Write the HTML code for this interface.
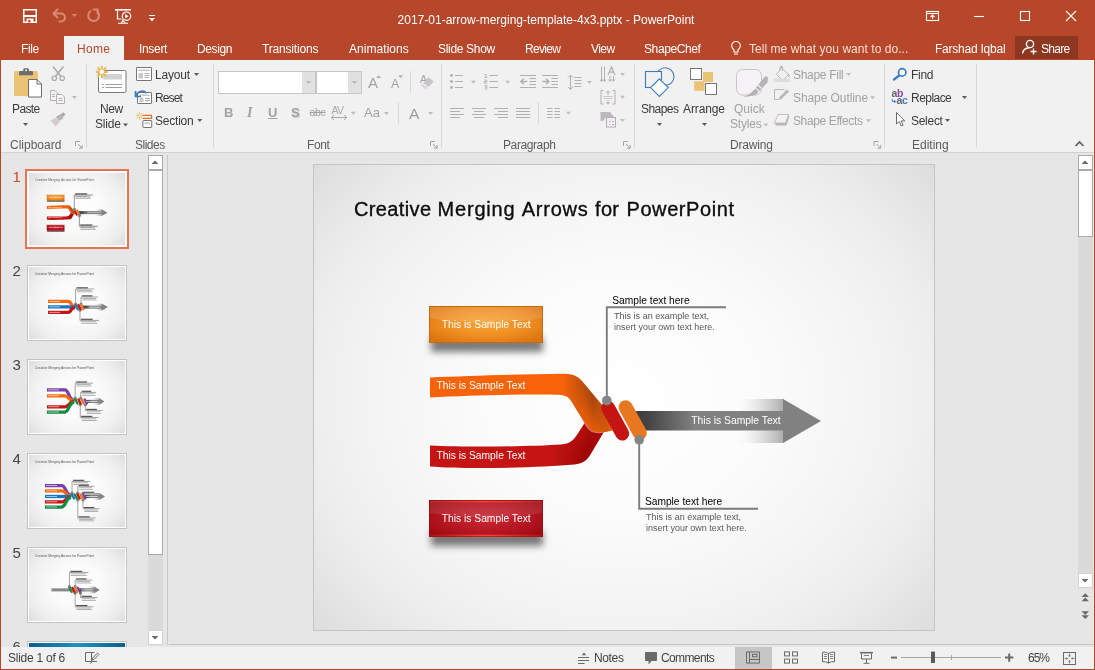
<!DOCTYPE html>
<html>
<head>
<meta charset="utf-8">
<title>PowerPoint</title>
<style>
html,body{margin:0;padding:0;}
body{will-change:transform;width:1095px;height:670px;overflow:hidden;position:relative;background:#e6e6e6;font-family:"Liberation Sans",sans-serif;font-size:12px;color:#444;}
.abs{position:absolute;}
#titlebar{left:0;top:0;width:1095px;height:60px;background:#b7472a;}
#title{left:0;width:1092px;top:13px;text-align:center;color:#fff;font-size:12px;letter-spacing:0px;}
.tab{position:absolute;top:37px;height:24px;line-height:24px;color:#fff;font-size:12px;white-space:nowrap;}
#hometab{left:64px;width:60px;top:36px;height:24px;background:#f1f1f1;}
#ribbon{left:1px;top:60px;width:1093px;height:92px;background:#f1f1f1;border-bottom:1px solid #d2d2d2;}
.glabel{position:absolute;top:138px;font-size:12px;color:#5c5c5c;white-space:nowrap;}
.gsep{position:absolute;top:64px;height:84px;width:1px;background:#d8d8d8;}
.rt{position:absolute;font-size:12px;color:#3b3b3b;white-space:nowrap;}
.rtd{position:absolute;font-size:12px;color:#a2a2a2;white-space:nowrap;}
#status{left:1px;top:647px;width:1093px;height:22px;background:#f1f1f1;}
.st{position:absolute;font-size:12px;color:#444;white-space:nowrap;}
#winborder{left:0;top:0;width:1093px;height:669px;border:1px solid #b7472a;border-top:none;pointer-events:none;}
.thumb{position:absolute;left:27px;width:98px;height:74px;border:1px solid #c3c3c3;background:#fff;}
.thumb .in{position:absolute;left:1px;top:1px;width:96px;height:72px;background:radial-gradient(ellipse 65px 56px at 50% 50%,#ffffff 0%,#fbfbfb 35%,#f5f5f5 55%,#f2f2f2 64.500%,#eeeeee 74%,#ebebeb 79%,#e3e3e3 90%,#dbdbdb 100%);overflow:hidden;}
.tnum{position:absolute;left:12.500px;font-size:15px;color:#444;width:10px;}
.stx{font-size:10.500px;color:#fff;white-space:nowrap;line-height:12px;}
.shd{font-size:10px;color:#000;white-space:nowrap;line-height:12px;}
.sbd{font-size:9.500px;color:#5a5a5a;white-space:nowrap;line-height:11px;}
</style>
</head>
<body>
<!-- TITLE BAR -->
<div id="titlebar" class="abs"></div>
<div id="title" class="abs">2017-01-arrow-merging-template-4x3.pptx - PowerPoint</div>
<div id="hometab" class="abs"></div>
<div id="tabs">
<div class="tab" style="left:21px;letter-spacing:-0.40px;">File</div>
<div class="tab" style="left:77px;color:#b7472a;letter-spacing:0.30px;">Home</div>
<div class="tab" style="left:139px;letter-spacing:-0.32px;">Insert</div>
<div class="tab" style="left:197px;letter-spacing:-0.38px;">Design</div>
<div class="tab" style="left:262px;letter-spacing:-0.18px;">Transitions</div>
<div class="tab" style="left:349px;letter-spacing:0.05px;">Animations</div>
<div class="tab" style="left:438px;letter-spacing:-0.32px;">Slide Show</div>
<div class="tab" style="left:525px;letter-spacing:-0.70px;">Review</div>
<div class="tab" style="left:591px;letter-spacing:-0.55px;">View</div>
<div class="tab" style="left:644px;letter-spacing:-0.40px;">ShapeChef</div>
<div class="tab" style="left:749px;color:#f6ddd5;letter-spacing:0.04px;">Tell me what you want to do...</div>
<div class="tab" style="left:935px;letter-spacing:-0.23px;">Farshad Iqbal</div>
<div class="abs" style="left:1015px;top:36px;width:63px;height:23px;background:#8e3720;"></div>
<div class="tab" style="left:1041px;letter-spacing:-0.72px;">Share</div>
</div>
<!-- RIBBON -->
<div id="ribbon" class="abs"></div>
<div id="ribbonc">
<!-- group separators -->
<div class="gsep" style="left:86px;"></div>
<div class="gsep" style="left:213px;"></div>
<div class="gsep" style="left:441px;"></div>
<div class="gsep" style="left:634px;"></div>
<div class="gsep" style="left:884px;"></div>
<div class="gsep" style="left:976px;"></div>
<!-- group labels -->
<div class="glabel" style="left:10px;letter-spacing:0.00px;">Clipboard</div>
<div class="glabel" style="left:135px;letter-spacing:-0.50px;">Slides</div>
<div class="glabel" style="left:307px;letter-spacing:-0.40px;">Font</div>
<div class="glabel" style="left:503px;letter-spacing:-0.40px;">Paragraph</div>
<div class="glabel" style="left:730px;letter-spacing:-0.19px;">Drawing</div>
<div class="glabel" style="left:912px;letter-spacing:0.00px;">Editing</div>
<!-- clipboard -->
<div class="rt" style="left:12px;top:102px;letter-spacing:-0.62px;">Paste</div>
<!-- slides -->
<div class="rt" style="left:100px;top:102px;letter-spacing:-0.45px;">New</div>
<div class="rt" style="left:95px;top:117px;letter-spacing:-0.18px;">Slide</div>
<div class="rt" style="left:155px;top:68px;letter-spacing:-0.18px;">Layout</div>
<div class="rt" style="left:155px;top:91px;letter-spacing:-0.86px;">Reset</div>
<div class="rt" style="left:155px;top:114px;letter-spacing:-0.22px;">Section</div>
<!-- font -->
<div class="abs" style="left:218px;top:71px;width:96px;height:21px;border:1px solid #c6c6c6;background:#fff;"></div>
<div class="abs" style="left:302px;top:72px;width:13px;height:21px;background:#e1e1e1;"></div>
<div class="abs" style="left:316px;top:71px;width:44px;height:21px;border:1px solid #c6c6c6;background:#fff;"></div>
<div class="abs" style="left:348px;top:72px;width:13px;height:21px;background:#e1e1e1;"></div>
<div class="rtd" style="left:224px;top:105px;font-weight:bold;font-size:13px;">B</div>
<div class="rtd" style="left:247px;top:105px;font-style:italic;font-family:'Liberation Serif',serif;font-size:14px;font-weight:bold;">I</div>
<div class="rtd" style="left:268px;top:105px;font-size:13px;text-decoration:underline;font-weight:bold;">U</div>
<div class="rtd" style="left:291px;top:105px;font-size:13px;font-weight:bold;text-shadow:1px 1px 1px #c8c8c8;">S</div>
<div class="rtd" style="left:309.500px;top:106px;font-size:10.500px;letter-spacing:-0.300px;text-decoration:line-through;">abc</div>
<div class="rtd" style="left:331.500px;top:103.500px;font-size:10.500px;letter-spacing:-0.600px;color:#a9a9a9;">AV</div>
<div class="rtd" style="left:364px;top:105px;font-size:13px;">Aa</div>
<div class="rtd" style="left:409px;top:104.500px;font-size:15.500px;color:#9c9c9c;">A</div>
<div class="rtd" style="left:368px;top:74px;font-size:15px;">A</div>
<div class="rtd" style="left:391px;top:77px;font-size:12.5px;">A</div>
<div class="abs" style="left:410px;top:71px;width:1px;height:22px;background:#d8d8d8;"></div>
<div class="abs" style="left:398px;top:102px;width:1px;height:22px;background:#d8d8d8;"></div>
<div class="abs" style="left:538px;top:102px;width:1px;height:22px;background:#d8d8d8;"></div>
<!-- drawing -->
<div class="rt" style="left:641px;top:102px;letter-spacing:-0.56px;">Shapes</div>
<div class="rt" style="left:683px;top:102px;letter-spacing:-0.12px;">Arrange</div>
<div class="rtd" style="left:734px;top:102px;letter-spacing:0.00px;">Quick</div>
<div class="rtd" style="left:730px;top:117px;letter-spacing:-0.17px;">Styles</div>
<div class="rtd" style="left:793px;top:68px;letter-spacing:-0.30px;">Shape Fill</div>
<div class="rtd" style="left:793px;top:91px;letter-spacing:-0.08px;">Shape Outline</div>
<div class="rtd" style="left:793px;top:114px;letter-spacing:-0.38px;">Shape Effects</div>
<!-- editing -->
<div class="rt" style="left:911px;top:68px;letter-spacing:-0.28px;">Find</div>
<div class="rt" style="left:911px;top:91px;letter-spacing:-0.54px;">Replace</div>
<div class="rt" style="left:911px;top:114px;letter-spacing:-0.28px;">Select</div>
<div class="abs" style="left:891.500px;top:86.500px;font-size:10.500px;line-height:12px;color:#666;font-weight:bold;letter-spacing:-0.300px;">a<span style="color:#8b46a8">b</span></div>
<div class="abs" style="left:896.500px;top:93.500px;font-size:10.500px;line-height:12px;color:#666;font-weight:bold;letter-spacing:-0.300px;">a<span style="color:#3b7cc0">c</span></div>
<div class="rtd" style="left:420px;top:73px;font-size:10.500px;">A</div>
</div>
<!-- LEFT PANE -->
<div id="leftpane">
<!-- selected thumb -->
<div class="abs" style="left:25px;top:169px;width:98px;height:74px;border:3px solid #ec7152;background:#fff;"></div>
<div class="thumb" style="top:171px;border-color:#fff;left:27px;"><div class="in"><svg width="96" height="72" viewBox="314 165 620 465"><use href="#slidemain"/><use href="#mini1x"/></svg></div></div>
<div class="tnum" style="top:168px;color:#d24726;">1</div>
<div class="thumb" style="top:265px;"><div class="in"><svg width="96" height="72" viewBox="314 165 620 465"><use href="#slidemini2"/></svg></div></div>
<div class="tnum" style="top:262px;">2</div>
<div class="thumb" style="top:359px;"><div class="in"><svg width="96" height="72" viewBox="314 165 620 465"><use href="#slidemini3"/></svg></div></div>
<div class="tnum" style="top:356px;">3</div>
<div class="thumb" style="top:453px;"><div class="in"><svg width="96" height="72" viewBox="314 165 620 465"><use href="#slidemini4"/></svg></div></div>
<div class="tnum" style="top:450px;">4</div>
<div class="thumb" style="top:547px;"><div class="in"><svg width="96" height="72" viewBox="314 165 620 465"><use href="#slidemini5"/></svg></div></div>
<div class="tnum" style="top:544px;">5</div>
<div class="thumb" style="top:641px;height:6px;border-bottom:none;overflow:hidden;"><div class="in" style="background:radial-gradient(ellipse at 50% 0%,#1f93c4 0%,#0b5f8a 70%,#084a6e 100%);"></div></div>
<div class="tnum" style="top:638px;height:9px;overflow:hidden;">6</div>
<!-- scrollbar -->
<div class="abs" style="left:148px;top:155px;width:15px;height:490px;background:#dadada;"></div>
<div class="abs" style="left:148px;top:155px;width:13px;height:13px;background:#fff;border:1px solid #ababab;"></div>
<div class="abs" style="left:148px;top:170px;width:13px;height:383px;background:#fff;border:1px solid #ababab;"></div>
<div class="abs" style="left:148px;top:630px;width:13px;height:13px;background:#fff;border:1px solid #d4d4d4;"></div>
<!-- splitter -->
<div class="abs" style="left:167px;top:155px;width:1px;height:490px;background:#c8c8c8;"></div>
<div class="abs" style="left:169px;top:644px;width:925px;height:1px;background:#c4c4c4;"></div>
</div>
<!-- SLIDE -->
<div id="slidewrap">
<div class="abs" style="left:313px;top:164px;width:622px;height:467px;background:#c4c4c4;"></div>
<div class="abs" id="slidebg" style="left:314px;top:165px;width:620px;height:465px;background:radial-gradient(ellipse 420px 360px at 50% 50%,#ffffff 0%,#fbfbfb 35%,#f5f5f5 55%,#f2f2f2 64.500%,#eeeeee 74%,#ebebeb 79%,#e3e3e3 90%,#dbdbdb 100%);"></div>
<svg class="abs" style="left:314px;top:165px;" width="620" height="465" viewBox="314 165 620 465">
<defs>
<linearGradient id="gOr" x1="0" y1="0" x2="1" y2="0"><stop offset="0" stop-color="#f8630a"/><stop offset="0.730" stop-color="#f8630a"/><stop offset="0.800" stop-color="#d2560b"/><stop offset="0.890" stop-color="#aa460d"/><stop offset="0.950" stop-color="#c9530c"/><stop offset="1" stop-color="#e2600c"/></linearGradient>
<linearGradient id="gOr2" gradientUnits="userSpaceOnUse" x1="571" y1="419" x2="595" y2="399"><stop offset="0" stop-color="#f6640b" stop-opacity="1"/><stop offset="0.450" stop-color="#e85f0b" stop-opacity="0.750"/><stop offset="1" stop-color="#c9530c" stop-opacity="0"/></linearGradient>
<linearGradient id="gRd" x1="0" y1="0" x2="1" y2="0"><stop offset="0" stop-color="#c41414"/><stop offset="0.700" stop-color="#c41414"/><stop offset="0.900" stop-color="#9c0606"/><stop offset="1" stop-color="#b00c0c"/></linearGradient>
<linearGradient id="gRd2" gradientUnits="userSpaceOnUse" x1="570" y1="432" x2="592" y2="447"><stop offset="0" stop-color="#c81515" stop-opacity="1"/><stop offset="0.500" stop-color="#b80f0f" stop-opacity="0.600"/><stop offset="1" stop-color="#a00808" stop-opacity="0"/></linearGradient>
<linearGradient id="gGy" x1="0" y1="0" x2="1" y2="0"><stop offset="0" stop-color="#3a3a3a"/><stop offset="0.12" stop-color="#454545"/><stop offset="0.42" stop-color="#818181"/><stop offset="1" stop-color="#818181"/></linearGradient>
<linearGradient id="gWing" x1="0" y1="0" x2="1" y2="0"><stop offset="0" stop-color="#f2f2f2" stop-opacity="0"/><stop offset="0.45" stop-color="#e2e2e2" stop-opacity="0.9"/><stop offset="1" stop-color="#adadad"/></linearGradient>
<radialGradient id="gBo" cx="0.5" cy="0.45" r="0.65"><stop offset="0" stop-color="#f9a437"/><stop offset="0.55" stop-color="#f08f22"/><stop offset="1" stop-color="#dc740f"/></radialGradient>
<linearGradient id="gGlow" x1="0" y1="0" x2="1" y2="0"><stop offset="0" stop-color="#ff4030" stop-opacity="0.150"/><stop offset="0.500" stop-color="#ff4030" stop-opacity="1"/><stop offset="1" stop-color="#ff4030" stop-opacity="0.150"/></linearGradient>
<radialGradient id="gBr" cx="0.5" cy="0.5" r="0.62"><stop offset="0" stop-color="#c92a36"/><stop offset="0.55" stop-color="#b81824"/><stop offset="1" stop-color="#9f0a12"/></radialGradient>
<filter id="blur3" x="-20%" y="-100%" width="140%" height="300%"><feGaussianBlur stdDeviation="3.600"/></filter>
<g id="slidemini2">
<text x="353" y="216" font-size="21.500" fill="#555" textLength="381" lengthAdjust="spacingAndGlyphs">Creative Merging Arrows for PowerPoint</text>
<rect x="740" y="402" width="46" height="44" fill="url(#gWing)"/>
<rect x="660" y="414" width="126" height="20" fill="url(#gGy)"/>
<path d="M785 402 L824 424 L785 446z" fill="#818181"/>
<path d="M437 387 H565 C593 387 576 420.0 612 420.0" fill="none" stroke="#f26a0c" stroke-width="21"/>
<rect x="445" y="384" width="70" height="5" fill="#fff" opacity="0.750"/>
<path d="M437 423 H565 C593 423 576 424.0 612 424.0" fill="none" stroke="#1577c2" stroke-width="21"/>
<rect x="445" y="420" width="70" height="5" fill="#fff" opacity="0.750"/>
<path d="M437 458 H565 C593 458 576 428.0 612 428.0" fill="none" stroke="#c41414" stroke-width="21"/>
<rect x="445" y="455" width="70" height="5" fill="#fff" opacity="0.750"/>
<path d="M615 404 V307 H734" fill="none" stroke="#7c7c7c" stroke-width="4.500"/>
<circle cx="615" cy="404" r="10.500" fill="#858585"/>
<rect x="621" y="296" width="73" height="7" fill="#1a1a1a" opacity="0.800"/>
<rect x="623" y="313" width="95" height="5" fill="#777" opacity="0.700"/>
<rect x="623" y="323" width="101" height="5" fill="#777" opacity="0.700"/>
<path d="M650 404 V359 H760" fill="none" stroke="#7c7c7c" stroke-width="4.500"/>
<circle cx="650" cy="404" r="10.500" fill="#858585"/>
<rect x="656" y="348" width="68" height="7" fill="#1a1a1a" opacity="0.800"/>
<rect x="658" y="365" width="88" height="5" fill="#777" opacity="0.700"/>
<rect x="658" y="375" width="93" height="5" fill="#777" opacity="0.700"/>
<path d="M643 444 V510 H766" fill="none" stroke="#7c7c7c" stroke-width="4.500"/>
<circle cx="643" cy="444" r="10.500" fill="#858585"/>
<rect x="649" y="499" width="76" height="7" fill="#1a1a1a" opacity="0.800"/>
<rect x="651" y="516" width="98" height="5" fill="#777" opacity="0.700"/>
<rect x="651" y="526" width="104" height="5" fill="#777" opacity="0.700"/>
<path d="M615 411 L629 437" stroke="#1577c2" stroke-width="15" stroke-linecap="round" fill="none"/>
<path d="M633 411 L647 437" stroke="#c41414" stroke-width="15" stroke-linecap="round" fill="none"/>
<path d="M651 411 L665 437" stroke="#e87722" stroke-width="15" stroke-linecap="round" fill="none"/>
<rect x="700" y="421" width="75" height="6" fill="#fff" opacity="0.700"/>
</g>
<g id="slidemini3">
<text x="353" y="216" font-size="21.500" fill="#555" textLength="381" lengthAdjust="spacingAndGlyphs">Creative Merging Arrows for PowerPoint</text>
<rect x="723" y="404" width="46" height="44" fill="url(#gWing)"/>
<rect x="684" y="416" width="85" height="20" fill="url(#gGy)"/>
<path d="M768 404 L801 426 L768 448z" fill="#818181"/>
<path d="M430 352 H545 C573 352 570 420.0 606 420.0" fill="none" stroke="#7a3fa6" stroke-width="21"/>
<rect x="438" y="349" width="70" height="5" fill="#fff" opacity="0.750"/>
<path d="M430 390 H545 C573 390 570 424.0 606 424.0" fill="none" stroke="#f26a0c" stroke-width="21"/>
<rect x="438" y="387" width="70" height="5" fill="#fff" opacity="0.750"/>
<path d="M430 461 H545 C573 461 570 428.0 606 428.0" fill="none" stroke="#c41414" stroke-width="21"/>
<rect x="438" y="458" width="70" height="5" fill="#fff" opacity="0.750"/>
<path d="M430 495 H545 C573 495 570 432.0 606 432.0" fill="none" stroke="#118a43" stroke-width="21"/>
<rect x="438" y="492" width="70" height="5" fill="#fff" opacity="0.750"/>
<path d="M612 405 V308 H727" fill="none" stroke="#7c7c7c" stroke-width="4.500"/>
<circle cx="612" cy="405" r="10.500" fill="#858585"/>
<rect x="618" y="297" width="71" height="7" fill="#1a1a1a" opacity="0.800"/>
<rect x="620" y="314" width="92" height="5" fill="#777" opacity="0.700"/>
<rect x="620" y="324" width="97" height="5" fill="#777" opacity="0.700"/>
<path d="M648 405 V368 H748" fill="none" stroke="#7c7c7c" stroke-width="4.500"/>
<circle cx="648" cy="405" r="10.500" fill="#858585"/>
<rect x="654" y="357" width="62" height="7" fill="#1a1a1a" opacity="0.800"/>
<rect x="656" y="374" width="80" height="5" fill="#777" opacity="0.700"/>
<rect x="656" y="384" width="85" height="5" fill="#777" opacity="0.700"/>
<path d="M678 447 V485 H789" fill="none" stroke="#7c7c7c" stroke-width="4.500"/>
<circle cx="678" cy="447" r="10.500" fill="#858585"/>
<rect x="684" y="474" width="68" height="7" fill="#1a1a1a" opacity="0.800"/>
<rect x="686" y="491" width="88" height="5" fill="#777" opacity="0.700"/>
<rect x="686" y="501" width="94" height="5" fill="#777" opacity="0.700"/>
<path d="M645 447 V530 H762" fill="none" stroke="#7c7c7c" stroke-width="4.500"/>
<circle cx="645" cy="447" r="10.500" fill="#858585"/>
<rect x="651" y="519" width="72" height="7" fill="#1a1a1a" opacity="0.800"/>
<rect x="653" y="536" width="93" height="5" fill="#777" opacity="0.700"/>
<rect x="653" y="546" width="99" height="5" fill="#777" opacity="0.700"/>
<path d="M613 413 L627 439" stroke="#118a43" stroke-width="15" stroke-linecap="round" fill="none"/>
<path d="M633 413 L647 439" stroke="#c41414" stroke-width="15" stroke-linecap="round" fill="none"/>
<path d="M653 413 L667 439" stroke="#e87722" stroke-width="15" stroke-linecap="round" fill="none"/>
<path d="M673 413 L687 439" stroke="#7a3fa6" stroke-width="15" stroke-linecap="round" fill="none"/>
<rect x="683" y="423" width="75" height="6" fill="#fff" opacity="0.700"/>
</g>
<g id="slidemini4">
<text x="353" y="216" font-size="21.500" fill="#555" textLength="381" lengthAdjust="spacingAndGlyphs">Creative Merging Arrows for PowerPoint</text>
<rect x="723" y="411" width="46" height="44" fill="url(#gWing)"/>
<rect x="676" y="423" width="93" height="20" fill="url(#gGy)"/>
<path d="M768 411 L805 433 L768 455z" fill="#818181"/>
<path d="M417 362 H525 C553 362 550 425.0 586 425.0" fill="none" stroke="#7a3fa6" stroke-width="21"/>
<rect x="425" y="359" width="70" height="5" fill="#fff" opacity="0.750"/>
<path d="M417 397 H525 C553 397 550 429.0 586 429.0" fill="none" stroke="#f26a0c" stroke-width="21"/>
<rect x="425" y="394" width="70" height="5" fill="#fff" opacity="0.750"/>
<path d="M417 433 H525 C553 433 550 433.0 586 433.0" fill="none" stroke="#1577c2" stroke-width="21"/>
<rect x="425" y="430" width="70" height="5" fill="#fff" opacity="0.750"/>
<path d="M417 468 H525 C553 468 550 437.0 586 437.0" fill="none" stroke="#c41414" stroke-width="21"/>
<rect x="425" y="465" width="70" height="5" fill="#fff" opacity="0.750"/>
<path d="M417 501 H525 C553 501 550 441.0 586 441.0" fill="none" stroke="#118a43" stroke-width="21"/>
<rect x="425" y="498" width="70" height="5" fill="#fff" opacity="0.750"/>
<path d="M592 412 V336 H711" fill="none" stroke="#7c7c7c" stroke-width="4.500"/>
<circle cx="592" cy="412" r="10.500" fill="#858585"/>
<rect x="598" y="325" width="73" height="7" fill="#1a1a1a" opacity="0.800"/>
<rect x="600" y="342" width="95" height="5" fill="#777" opacity="0.700"/>
<rect x="600" y="352" width="101" height="5" fill="#777" opacity="0.700"/>
<path d="M629 412 V368 H736" fill="none" stroke="#7c7c7c" stroke-width="4.500"/>
<circle cx="629" cy="412" r="10.500" fill="#858585"/>
<rect x="635" y="357" width="66" height="7" fill="#1a1a1a" opacity="0.800"/>
<rect x="637" y="374" width="85" height="5" fill="#777" opacity="0.700"/>
<rect x="637" y="384" width="90" height="5" fill="#777" opacity="0.700"/>
<path d="M663 412 V413 H770" fill="none" stroke="#7c7c7c" stroke-width="4.500"/>
<circle cx="663" cy="412" r="10.500" fill="#858585"/>
<rect x="669" y="402" width="66" height="7" fill="#1a1a1a" opacity="0.800"/>
<rect x="671" y="419" width="85" height="5" fill="#777" opacity="0.700"/>
<rect x="671" y="429" width="90" height="5" fill="#777" opacity="0.700"/>
<path d="M663 455 V512 H770" fill="none" stroke="#7c7c7c" stroke-width="4.500"/>
<circle cx="663" cy="455" r="10.500" fill="#858585"/>
<rect x="669" y="501" width="66" height="7" fill="#1a1a1a" opacity="0.800"/>
<rect x="671" y="518" width="85" height="5" fill="#777" opacity="0.700"/>
<rect x="671" y="528" width="90" height="5" fill="#777" opacity="0.700"/>
<path d="M629 455 V572 H744" fill="none" stroke="#7c7c7c" stroke-width="4.500"/>
<circle cx="629" cy="455" r="10.500" fill="#858585"/>
<rect x="635" y="561" width="71" height="7" fill="#1a1a1a" opacity="0.800"/>
<rect x="637" y="578" width="92" height="5" fill="#777" opacity="0.700"/>
<rect x="637" y="588" width="97" height="5" fill="#777" opacity="0.700"/>
<path d="M591 420 L605 446" stroke="#1577c2" stroke-width="15" stroke-linecap="round" fill="none"/>
<path d="M609 420 L623 446" stroke="#118a43" stroke-width="15" stroke-linecap="round" fill="none"/>
<path d="M627 420 L641 446" stroke="#c41414" stroke-width="15" stroke-linecap="round" fill="none"/>
<path d="M645 420 L659 446" stroke="#e87722" stroke-width="15" stroke-linecap="round" fill="none"/>
<path d="M663 420 L677 446" stroke="#7a3fa6" stroke-width="15" stroke-linecap="round" fill="none"/>
<rect x="683" y="430" width="75" height="6" fill="#fff" opacity="0.700"/>
</g>
<g id="slidemini5">
<text x="353" y="216" font-size="21.500" fill="#555" textLength="381" lengthAdjust="spacingAndGlyphs">Creative Merging Arrows for PowerPoint</text>
<rect x="690" y="407" width="46" height="44" fill="url(#gWing)"/>
<rect x="640" y="419" width="96" height="20" fill="url(#gGy)"/>
<path d="M735 407 L771 429 L735 451z" fill="#818181"/>
<rect x="459" y="419" width="121" height="20" fill="#8a8a8a"/>
<path d="M575 408 V317 H698" fill="none" stroke="#7c7c7c" stroke-width="4.500"/>
<circle cx="575" cy="408" r="10.500" fill="#858585"/>
<rect x="581" y="306" width="76" height="7" fill="#1a1a1a" opacity="0.800"/>
<rect x="583" y="323" width="98" height="5" fill="#777" opacity="0.700"/>
<rect x="583" y="333" width="104" height="5" fill="#777" opacity="0.700"/>
<path d="M612 408 V366 H723" fill="none" stroke="#7c7c7c" stroke-width="4.500"/>
<circle cx="612" cy="408" r="10.500" fill="#858585"/>
<rect x="618" y="355" width="68" height="7" fill="#1a1a1a" opacity="0.800"/>
<rect x="620" y="372" width="88" height="5" fill="#777" opacity="0.700"/>
<rect x="620" y="382" width="94" height="5" fill="#777" opacity="0.700"/>
<path d="M647 450 V478 H756" fill="none" stroke="#7c7c7c" stroke-width="4.500"/>
<circle cx="647" cy="450" r="10.500" fill="#858585"/>
<rect x="653" y="467" width="67" height="7" fill="#1a1a1a" opacity="0.800"/>
<rect x="655" y="484" width="87" height="5" fill="#777" opacity="0.700"/>
<rect x="655" y="494" width="92" height="5" fill="#777" opacity="0.700"/>
<path d="M612 450 V538 H730" fill="none" stroke="#7c7c7c" stroke-width="4.500"/>
<circle cx="612" cy="450" r="10.500" fill="#858585"/>
<rect x="618" y="527" width="73" height="7" fill="#1a1a1a" opacity="0.800"/>
<rect x="620" y="544" width="94" height="5" fill="#777" opacity="0.700"/>
<rect x="620" y="554" width="100" height="5" fill="#777" opacity="0.700"/>
<path d="M576 416 L590 442" stroke="#118a43" stroke-width="15" stroke-linecap="round" fill="none"/>
<path d="M594 416 L608 442" stroke="#c41414" stroke-width="15" stroke-linecap="round" fill="none"/>
<path d="M612 416 L626 442" stroke="#e87722" stroke-width="15" stroke-linecap="round" fill="none"/>
<path d="M630 416 L644 442" stroke="#7a3fa6" stroke-width="15" stroke-linecap="round" fill="none"/>
<rect x="650" y="426" width="75" height="6" fill="#fff" opacity="0.700"/>
</g>
<g id="mini1x">
<path d="M726 307.200 H606.800 V400 M758 508.700 H639.200 V440" fill="none" stroke="#808080" stroke-width="4.500"/>
<circle cx="606.800" cy="400.500" r="11" fill="#858585"/><circle cx="639.200" cy="439.800" r="11" fill="#858585"/>
<rect x="350" y="196" width="390" height="28" fill="#efefef" opacity="0.450"/>
<rect x="612" y="296" width="78" height="6" fill="#111" opacity="0.700"/><rect x="645" y="497" width="78" height="6" fill="#111" opacity="0.700"/>
<rect x="614" y="313" width="95" height="4" fill="#666" opacity="0.600"/><rect x="614" y="324" width="100" height="4" fill="#666" opacity="0.600"/>
<rect x="646" y="514" width="95" height="4" fill="#666" opacity="0.600"/><rect x="646" y="525" width="100" height="4" fill="#666" opacity="0.600"/>
</g>
<clipPath id="cpBo"><rect x="429" y="306" width="114" height="37"/></clipPath>
</defs>
<g id="slidemain">
<!-- connectors -->
<g fill="none" stroke="#7c7c7c" stroke-width="1.900">
<path d="M726 307.200 H606.800 V400"/>
<path d="M758 508.700 H639.200 V440"/>
</g>
<!-- gray arrow -->
<rect x="738" y="399" width="46" height="44" fill="url(#gWing)"/>
<rect x="630" y="411" width="154" height="19.500" fill="url(#gGy)"/>
<path d="M783 399 L821 421 L783 443z" fill="#818181"/>
<!-- red lower ribbon -->
<clipPath id="cpRd"><path d="M430 445.500 C470 447.500 530 446.500 561 444.500 C570 443.800 574 440 578 433.500 L587 419.500 L604.500 431 L592 452 C587 460.500 584 463.500 574 464.500 C540 467.500 470 469.500 430 466.500z"/></clipPath>
<path d="M430 445.500 C470 447.500 530 446.500 561 444.500 C570 443.800 574 440 578 433.500 L587 419.500 L604.500 431 L592 452 C587 460.500 584 463.500 574 464.500 C540 467.500 470 469.500 430 466.500z" fill="url(#gRd)"/>
<g clip-path="url(#cpRd)"><rect x="556" y="415" width="50" height="52" fill="url(#gRd2)" mask="url(#mOr)"/></g>
<!-- orange upper ribbon -->
<linearGradient id="fdOr" gradientUnits="userSpaceOnUse" x1="560" y1="0" x2="582" y2="0"><stop offset="0" stop-color="#000"/><stop offset="1" stop-color="#fff"/></linearGradient><mask id="mOr" maskUnits="userSpaceOnUse" x="550" y="360" width="70" height="120"><rect x="550" y="360" width="70" height="120" fill="url(#fdOr)"/></mask>
<clipPath id="cpOr"><path d="M430 377.500 C470 376 520 374.200 561 373.800 C572 373.800 577.500 375.500 582.500 381.500 L602.500 405.500 C606 412 610 424 612.500 430.500 C606 432.500 599 432.800 594 432 C590 431 587 426.500 583.500 421 L571.500 401.500 C568.500 397 566 395.300 559 394.800 C520 394 470 395.500 430 397.500z"/></clipPath>
<path d="M430 377.500 C470 376 520 374.200 561 373.800 C572 373.800 577.500 375.500 582.500 381.500 L602.500 405.500 C606 412 610 424 612.500 430.500 C606 432.500 599 432.800 594 432 C590 431 587 426.500 583.500 421 L571.500 401.500 C568.500 397 566 395.300 559 394.800 C520 394 470 395.500 430 397.500z" fill="url(#gOr)"/>
<g clip-path="url(#cpOr)"><rect x="556" y="370" width="50" height="66" fill="url(#gOr2)" mask="url(#mOr)"/></g>
<path d="M583 420.500 C587 427 589.500 431.500 594.500 432.300 C598 432.800 601 432.600 604 432.200" fill="none" stroke="#ec9c94" stroke-width="1.100" opacity="0.650"/>
<!-- capsules -->
<path d="M608.200 408 L622.200 433.500" stroke="#c41414" stroke-width="14" stroke-linecap="round" fill="none"/>
<path d="M625.600 407.200 L639.800 433" stroke="#e87722" stroke-width="14" stroke-linecap="round" fill="none"/>
<circle cx="606.800" cy="400.500" r="4.800" fill="#858585"/>
<circle cx="639.200" cy="439.800" r="4.800" fill="#858585"/>
<!-- orange button -->
<rect x="431" y="337" width="112" height="15" fill="#2a2a2a" opacity="0.620" filter="url(#blur3)"/>
<rect x="429.500" y="306.500" width="113" height="36" fill="url(#gBo)" stroke="#c56a14" stroke-width="1"/>
<path d="M430 307 h112 v11 c-30 5.500 -82 5.500 -112 0z" fill="#ffffff" opacity="0.130"/>
<!-- red button -->
<rect x="431" y="531" width="112" height="15" fill="#2a2a2a" opacity="0.620" filter="url(#blur3)"/>
<rect x="429.500" y="500.500" width="113" height="36" fill="url(#gBr)" stroke="#9c0d12" stroke-width="1"/>
<path d="M430 501 h112 v12 c-30 5.500 -82 5.500 -112 0z" fill="#ffffff" opacity="0.100"/>
<rect x="430" y="500.800" width="112" height="1.600" fill="url(#gGlow)"/><rect x="430" y="534.600" width="112" height="1.800" fill="url(#gGlow)"/>
<!-- slide text -->
<g font-family="Liberation Sans, sans-serif">
<g font-size="20" fill="#0d0d0d" stroke="#0d0d0d" stroke-width="0.350"><text x="354" y="215.600" textLength="77" lengthAdjust="spacing">Creative</text><text x="437.600" y="215.600" textLength="77" lengthAdjust="spacing">Merging</text><text x="521.700" y="215.600" textLength="66" lengthAdjust="spacing">Arrows</text><text x="595" y="215.600" textLength="24" lengthAdjust="spacing">for</text><text x="626.500" y="215.600" textLength="107.500" lengthAdjust="spacing">PowerPoint</text></g>
<g font-size="10.200" fill="#fff">
<text x="441.700" y="328" textLength="89" lengthAdjust="spacingAndGlyphs">This is Sample Text</text>
<text x="441.700" y="522" textLength="89" lengthAdjust="spacingAndGlyphs">This is Sample Text</text>
<text x="436.400" y="388.900" textLength="89" lengthAdjust="spacingAndGlyphs">This is Sample Text</text>
<text x="436.400" y="458.600" textLength="89" lengthAdjust="spacingAndGlyphs">This is Sample Text</text>
<text x="691.300" y="424.200" textLength="89.400" lengthAdjust="spacingAndGlyphs">This is Sample Text</text>
</g>
<g font-size="10" fill="#000">
<text x="612.300" y="304.300" textLength="77.300" lengthAdjust="spacingAndGlyphs">Sample text here</text>
<text x="644.900" y="505.300" textLength="77.300" lengthAdjust="spacingAndGlyphs">Sample text here</text>
</g>
<g font-size="9.600" fill="#595959">
<text x="614" y="318.900" textLength="95" lengthAdjust="spacingAndGlyphs">This is an example text,</text>
<text x="614" y="330" textLength="100.700" lengthAdjust="spacingAndGlyphs">insert your own text here.</text>
<text x="646" y="519.900" textLength="95" lengthAdjust="spacingAndGlyphs">This is an example text,</text>
<text x="646" y="530.700" textLength="100.700" lengthAdjust="spacingAndGlyphs">insert your own text here.</text>
</g>
</g>
</g>
</svg>
</div>
<!-- RIGHT SCROLLBAR -->
<div id="rscroll">
<div class="abs" style="left:1078px;top:155px;width:15px;height:433px;background:#dadada;"></div>
<div class="abs" style="left:1078px;top:155px;width:13px;height:13px;background:#fff;border:1px solid #ababab;"></div>
<div class="abs" style="left:1078px;top:170px;width:13px;height:65px;background:#fff;border:1px solid #ababab;"></div>
<div class="abs" style="left:1078px;top:573px;width:13px;height:13px;background:#fff;border:1px solid #d4d4d4;"></div>
</div>
<!-- STATUS -->
<div id="status" class="abs"></div>
<div id="statusc">
<div class="st" style="left:8px;top:651px;letter-spacing:-0.25px;">Slide 1 of 6</div>
<div class="st" style="left:594px;top:651px;letter-spacing:-0.36px;">Notes</div>
<div class="st" style="left:661px;top:651px;letter-spacing:-0.62px;">Comments</div>
<div class="st" style="left:1028px;top:651px;letter-spacing:-1.00px;">65%</div>
<div class="abs" style="left:735px;top:647px;width:37px;height:22px;background:#c6c6c6;"></div>
</div>
<svg id="icons" class="abs" style="left:0;top:0;" width="1095" height="670" viewBox="0 0 1095 670">
<defs>
<path id="dd" d="M0 0h5l-2.5 3z"/>
<path id="ln" d="M0.500 5 V0.500 H5 M3 3 l4 4 M7.200 4 v3.200 h-3.200"/>
</defs>
<!-- ===== title bar icons ===== -->
<g id="qat">
<rect x="23.75" y="9.75" width="12.5" height="12.5" fill="none" stroke="#fff" stroke-width="1.5"/>
<rect x="24" y="15" width="12" height="2" fill="#fff"/>
<rect x="26.5" y="18.5" width="7" height="4" fill="#fff"/>
<rect x="28.2" y="20" width="2.2" height="2.5" fill="#b7472a"/>
<!-- undo -->
<path d="M57.5 9.5 L53.5 13.5 L57.5 17.5 M54 13.5 H61 a4 4 0 0 1 0 8 H59.5" fill="none" stroke="#d88a73" stroke-width="2.100" stroke-linecap="round" stroke-linejoin="round"/>
<use href="#dd" x="72" y="14" fill="#d88a73"/>
<!-- redo -->
<path d="M97.200 11.600 a5.400 5.400 0 1 1 -6.800 -0.300" fill="none" stroke="#d88a73" stroke-width="2" stroke-linecap="round"/>
<path d="M93.500 9.600 h4.300 v4.300" fill="none" stroke="#d88a73" stroke-width="2" stroke-linecap="round" stroke-linejoin="round"/>
<!-- slideshow from beginning -->
<rect x="115" y="9" width="16" height="1.6" fill="#fff"/>
<path d="M117.5 10.5 V19 H121.5" fill="none" stroke="#fff" stroke-width="1.2"/>
<circle cx="126.5" cy="16.2" r="4.2" fill="none" stroke="#fff" stroke-width="1.2"/>
<path d="M125.2 14 v4.4 l3.4 -2.2z" fill="#fff"/>
<path d="M118 23.2 h10 M123 19.5 l-1.5 3.5 M123 20.5 l2 2.5" fill="none" stroke="#fff" stroke-width="1.1"/>
<!-- customize -->
<rect x="149" y="15" width="6" height="1" fill="#fff"/>
<path d="M149 18 h6 l-3 3.200z" fill="#fff"/>
</g>
<!-- window controls -->
<g id="winctl" fill="none" stroke="#fff" stroke-width="1.1">
<rect x="926.5" y="11.5" width="12" height="9"/>
<path d="M926.5 13.5 h12" />
<path d="M932.5 19 v-4 M930.5 17 l2 -2 l2 2"/>
<path d="M974 16.5 h10"/>
<rect x="1020.5" y="11.5" width="9" height="9"/>
<path d="M1066 11 l10 10 M1076 11 l-10 10"/>
</g>
<!-- tab row icons -->
<g id="tabicons" fill="none" stroke="#fff" stroke-width="1.1">
<path d="M734 50 c-1.5 -1.2 -2.3 -2.4 -2.3 -4.2 a4.3 4.3 0 0 1 8.6 0 c0 1.8 -0.8 3 -2.3 4.2 v2 h-4z M734 54 h4"/>
<circle cx="1030" cy="44" r="3.6" stroke-width="1.4"/>
<path d="M1022.5 53.5 c0.5 -3.5 3 -5.5 7 -5.8" stroke-width="1.4"/>
<path d="M1033.5 48.5 v6 M1030.5 51.5 h6" stroke-width="1.4"/>
</g>
<!-- ===== Clipboard ===== -->
<g id="g-clip">
<rect x="14" y="71" width="24" height="25" rx="1.5" fill="#eac374"/>
<path d="M19 75.200 V72.300 a1.200 1.200 0 0 1 1.200 -1.200 H23.300 V69.600 a1.400 1.400 0 0 1 1.400 -1.400 h2.800 a1.400 1.400 0 0 1 1.400 1.400 V71.100 H31.800 a1.200 1.200 0 0 1 1.200 1.200 V75.200z" fill="#6d6d6d"/>
<rect x="25.200" y="69.500" width="1.800" height="1.700" fill="#f1f1f1"/>
<path d="M28.5 79.500 h8.5 l4.500 4.500 v13 h-13z" fill="#fff" stroke="#6d6d6d" stroke-width="1"/>
<path d="M37 79.500 v4.500 h4.500" fill="none" stroke="#6d6d6d" stroke-width="1"/>
<use href="#dd" x="23" y="123" fill="#5a5a5a"/>
<!-- scissors -->
<g fill="none" stroke="#a9a9a9" stroke-width="1.5">
<path d="M53 66.500 L60.800 76.200 M63.500 66.500 L55.600 76.200"/>
<circle cx="54.300" cy="78.200" r="2.200" stroke-width="1.200"/><circle cx="62.200" cy="78.200" r="2.200" stroke-width="1.200"/>
</g>
<!-- copy -->
<g fill="#f7f3f7" stroke="#b1b1b1" stroke-width="1">
<path d="M50.500 90.500 h4.500 l2.500 2.500 v7.500 h-7z"/>
<path d="M56.500 94.500 h5.500 l2.500 2.500 v6.500 h-8z"/>
<path d="M52 94.500h3 M52 96.500h3 M58.500 98.500h4 M58.500 100.500h4" fill="none"/>
</g>
<use href="#dd" x="72" y="96" fill="#b9b9b9"/>
<!-- format painter -->
<path d="M60.500 114.500 l3 -2.200 l2 2.500 l-3 2.200z" fill="#a6a6a6"/>
<path d="M56 116.800 l4.500 -2.800 l3 4 l-4.300 3z" fill="#b4b4b4"/>
<path d="M50.500 120.500 l6.200 -3.200 l3.300 4.500 l-4.500 4.800z" fill="#d4ccd4"/>
</g>
<!-- ===== Slides ===== -->
<g id="g-slides">
<rect x="98.500" y="70.500" width="27.500" height="22" rx="1.500" fill="#fff" stroke="#767676" stroke-width="1"/>
<rect x="103" y="74" width="19" height="5.500" fill="#d2d2d2"/>
<path d="M105.500 84.500 h16.500 M105.500 87.500 h16.500 M102 84.500 h2 M102 87.500 h2" stroke="#a0a0a0" stroke-width="1" fill="none"/>
<g stroke="#e9bc5c" stroke-width="2.100">
<path d="M101.800 65.800 v12.200 M95.700 71.900 h12.200 M97.500 67.600 l8.600 8.600 M106.100 67.600 l-8.600 8.600"/>
</g>
<circle cx="101.800" cy="71.900" r="2.300" fill="#fbf8f0"/>
<use href="#dd" x="123" y="123.500" fill="#5a5a5a"/>
<!-- layout -->
<rect x="136.500" y="67.500" width="15" height="13" rx="0.500" fill="#fff" stroke="#767676"/>
<rect x="138.500" y="69.500" width="11" height="1.600" fill="#c8c8c8"/>
<rect x="138.500" y="73" width="4.500" height="5.500" fill="#c8c8c8"/>
<path d="M144.500 73.500 h5 M144.500 75.500 h5 M144.500 77.500 h4" stroke="#a8a8a8" fill="none"/>
<use href="#dd" x="194" y="73" fill="#5a5a5a"/>
<!-- reset -->
<rect x="137.500" y="92.500" width="14" height="11" rx="0.500" fill="#fff" stroke="#767676"/>
<rect x="139.500" y="94.500" width="10" height="1.500" fill="#c8c8c8"/>
<rect x="139.500" y="97.500" width="4" height="4.500" fill="#c8c8c8"/>
<path d="M145 98.500 h5 M145 100.500 h5" stroke="#a8a8a8" fill="none"/>
<path d="M135.500 91 v5.500 h5.500 M136 96 c1.500 -4.500 6.500 -6.500 10.500 -3" fill="none" stroke="#3b7cc0" stroke-width="1.700"/>
<!-- section -->
<g stroke="#eac06a" stroke-width="1">
<path d="M139.500 112 v7.400 M135.800 115.700 h7.400 M136.900 113.100 l5.200 5.200 M142.100 113.100 l-5.200 5.200"/>
</g>
<circle cx="139.500" cy="115.700" r="1.100" fill="#f8f4ec"/>
<path d="M142.500 115.300 h9 v3 h-9" fill="none" stroke="#e6732b" stroke-width="1.200"/>
<rect x="142.900" y="120.500" width="8.800" height="7" rx="0.500" fill="#fff" stroke="#767676"/>
<rect x="144.500" y="122.300" width="5.500" height="2" fill="#c8c8c8"/>
<use href="#dd" x="197.300" y="119" fill="#5a5a5a"/>
</g>
<!-- ===== Font ===== -->
<g id="g-font">
<use href="#dd" x="306" y="81" fill="#b5b5b5"/>
<use href="#dd" x="352" y="81" fill="#b5b5b5"/>
<path d="M376 78 h5.200 l-2.600 -2.800z" fill="#b0b0b0"/>
<path d="M398 75.200 h5.200 l-2.600 2.800z" fill="#b0b0b0"/>
<!-- clear formatting -->
<path d="M428.300 77.200 l5.600 4.200 l-5.400 5.600 l-5.300 -4z" fill="#c9c5c9"/>
<path d="M422.300 84 l5 3.800 l-1.500 1.600 l-5 -3.800z" fill="#d8d4d8"/>
<!-- AV arrow -->
<path d="M331.500 117.500 h15 M334 115 l-2.800 2.500 l2.800 2.500 M344 115 l2.800 2.500 l-2.800 2.500" fill="none" stroke="#a9a9a9" stroke-width="1"/>
<use href="#dd" x="350.800" y="111.800" fill="#bdbdbd"/>
<use href="#dd" x="384" y="112" fill="#bdbdbd"/>
<use href="#dd" x="428" y="112" fill="#bdbdbd"/>
</g>
<!-- launchers -->

<!-- ===== Paragraph ===== -->
<g id="g-para" stroke="#b3aeb3" fill="none" stroke-width="1">
<!-- bullets -->
<path d="M455 75.500 h8 M455 81.500 h8 M455 87.500 h8"/>
<g fill="#b3aeb3" stroke="none"><circle cx="451.500" cy="75.500" r="1.400"/><circle cx="451.500" cy="81.500" r="1.400"/><circle cx="451.500" cy="87.500" r="1.400"/></g>
<use href="#dd" x="471" y="80.800" fill="#c0bcc0" stroke="none"/>
<!-- numbering -->
<path d="M489.500 75.500 h8.500 M489.500 81.500 h8.500 M489.500 87.500 h8.500"/>
<path d="M484.500 74.500 h1.500 v3 M484.300 77.500 h3 M484.300 80 h2.500 v1.500 h-2.500 v1.500 h2.800 M484.300 85.500 h2.500 v3.600 h-2.500 M485 87.300 h1.800" stroke-width="0.900"/>
<use href="#dd" x="505.200" y="80.800" fill="#c0bcc0" stroke="none"/>
<!-- decrease indent -->
<path d="M520 75.500 h16 M529.500 78.500 h6.500 M529.500 81.500 h6.500 M529.500 84.500 h6.500 M520 87.500 h16"/>
<path d="M520.800 81.500 h6.500 M523.800 78.700 l-3 2.800 l3 2.800" stroke-width="1.400"/>
<!-- increase indent -->
<path d="M542 75.500 h16 M551.500 78.500 h6.500 M551.500 81.500 h6.500 M551.500 84.500 h6.500 M542 87.500 h16"/>
<path d="M542.500 81.500 h6.500 M546 78.700 l3 2.800 l-3 2.800" stroke-width="1.400"/>
<!-- line spacing -->
<path d="M570.500 75 v14.500 M567.800 77.800 l2.700 -2.800 l2.700 2.800 M567.800 86.700 l2.700 2.800 l2.700 -2.800"/>
<path d="M574.500 77.500 h7 M574.500 80.500 h7 M574.500 83.500 h7 M574.500 86.500 h7"/>
<use href="#dd" x="587" y="81" fill="#c0bcc0" stroke="none"/>
<!-- text direction -->
<path d="M601.500 66.500 v14.500 M604.500 66.500 v14.500 M600 79.500 l1.500 2 l1.500 -2 M603 79.500 l1.500 2 l1.500 -2"/>
<path d="M610 76 v5 M613.500 76 v5 M608.700 79.500 l1.300 2 l1.300 -2 M612.200 79.500 l1.300 2 l1.300 -2"/>
<path d="M608 75 l3.500 -8 l3.500 8 M609.300 72.200 h4.400" stroke-width="1.200"/>
<use href="#dd" x="620" y="73" fill="#c0bcc0" stroke="none"/>
<!-- align text -->
<path d="M603.500 90.500 h-2.500 v13.500 h2.500 M612.500 90.500 h2.500 v13.500 h-2.500"/>
<path d="M608 91 v4 M606 92.800 l2 -2 l2 2 M608 104 v-4 M606 102.200 l2 2 l2 -2"/>
<path d="M603.500 96.500 h9 M603.500 98.500 h9" stroke="#cfc8cf"/>
<use href="#dd" x="620" y="95.800" fill="#c0bcc0" stroke="none"/>
<!-- smartart -->
<path d="M600.500 112 h9.500 l4 5 h-8 l-3 4 h-2.500z" fill="#bcb8bc" stroke="none"/>
<rect x="606.500" y="117.500" width="9" height="9.500" fill="#f3eef3"/>
<path d="M609 121.500 h1.500 M612 121.500 h2 M609 124.500 h1.500 M612 124.500 h2"/>
<use href="#dd" x="620" y="119" fill="#c0bcc0" stroke="none"/>
<!-- align row -->
<path d="M450 108.500 h14 M450 111.500 h10 M450 114.500 h14 M450 117.500 h10"/>
<path d="M472 108.500 h14 M474 111.500 h10 M472 114.500 h14 M474 117.500 h10"/>
<path d="M494 108.500 h14 M498 111.500 h10 M494 114.500 h14 M498 117.500 h10"/>
<path d="M516 108.500 h14 M516 111.500 h14 M516 114.500 h14 M516 117.500 h14"/>
<path d="M547 108.500 h5.500 M554.500 108.500 h5.500 M547 111.500 h5.500 M554.500 111.500 h5.500 M547 114.500 h5.500 M554.500 114.500 h5.500 M547 117.500 h5.500 M554.500 117.500 h5.500"/>
<use href="#dd" x="566" y="111.800" fill="#c0bcc0" stroke="none"/>
</g>
<!-- ===== Drawing ===== -->
<g id="g-draw">
<circle cx="665.200" cy="76.600" r="8.800" fill="none" stroke="#3b7cc0" stroke-width="1.100"/>
<rect x="645.500" y="71.500" width="16" height="16" fill="#f1f1f1" stroke="#3b7cc0" stroke-width="1.100"/>
<path d="M659.400 78.800 l8.800 8.800 l-8.800 8.800 l-8.800 -8.800z" fill="#fff" stroke="#3b7cc0" stroke-width="1.100"/>
<use href="#dd" x="657" y="123" fill="#5a5a5a"/>
<!-- arrange -->
<rect x="703" y="72" width="10" height="10" fill="#eac374"/>
<rect x="694.200" y="81.300" width="10.300" height="9.500" fill="#eac374"/>
<rect x="690.500" y="68.500" width="11" height="11" fill="#fff" stroke="#767676"/>
<rect x="705.500" y="83.500" width="11" height="11" fill="#fff" stroke="#767676"/>
<use href="#dd" x="702" y="123" fill="#5a5a5a"/>
<!-- quick styles -->
<rect x="736.500" y="69.500" width="25" height="25.500" rx="6" fill="#f5f1f5" stroke="#c6c6c6" stroke-width="1"/>
<path d="M765.500 76 l2.500 1.500 l-0.500 5 l-8 8.500 l-3.500 -3.500z" fill="#b3b3b3"/>
<path d="M755.500 88.500 l3 3 c-1 3 -6 5 -15 5.500 c5 -2 9 -5 12 -8.500z" fill="#b3b3b3"/>
<path d="M758 85 l3.500 3.500" stroke="#f1f1f1" stroke-width="1.200"/>
<use href="#dd" x="763.200" y="123.400" fill="#bdbdbd"/>
<!-- shape fill -->
<path d="M781.500 68 l7 6.500 l-6 6 l-6 -6z M781.500 68 v-1 M782.500 71 v-4.500 h-2.500 v4" fill="none" stroke="#b8b8b8" stroke-width="1"/>
<path d="M788 73 c1.500 1.500 2 3 1.500 5 c-1 -1 -1.500 -2 -1.500 -5z" fill="#b8b8b8"/>
<rect x="774" y="78.500" width="16" height="3.500" fill="#e1dbe1"/>
<use href="#dd" x="846" y="73" fill="#bdbdbd"/>
<!-- shape outline -->
<path d="M784.500 89.500 h-10 v10 h4" fill="none" stroke="#b8b8b8" stroke-width="1"/>
<path d="M787 89.500 l2 2 l-7.500 7.500 l-3 1 l1 -3z" fill="#b8b8b8"/>
<use href="#dd" x="870" y="96.200" fill="#bdbdbd"/>
<!-- shape effects -->
<path d="M778 114.500 h10.500 l-3 8.500 h-11z" fill="#f5f1f5" stroke="#c2c2c2" stroke-width="1"/>
<path d="M774.500 123 h11 l3 -8.500 l0.800 2 l-2.800 9 h-10.500z" fill="#b8b8b8"/>
<use href="#dd" x="866" y="119.200" fill="#bdbdbd"/>
</g>
<!-- ===== Editing ===== -->
<g id="g-edit">
<circle cx="902.200" cy="72.400" r="3.700" fill="#fff" stroke="#3b7cc0" stroke-width="1.700"/>
<path d="M899.300 75.500 l-5.300 4" stroke="#3b7cc0" stroke-width="2.200" stroke-linecap="round"/>
<use href="#dd" x="962" y="96" fill="#5a5a5a"/>
<use href="#dd" x="945" y="119" fill="#5a5a5a"/>
<path d="M896.500 112.500 v11.500 l2.800 -2.500 l2 4.500 l1.800 -0.800 l-2 -4.300 h3.700z" fill="#fff" stroke="#6a6a6a" stroke-width="1"/>
<path d="M892.300 99 v2.500 h3 M894.300 100 l1.500 1.500 l-1.500 1.500" fill="none" stroke="#3b7cc0" stroke-width="1"/>
</g>
<!-- collapse chevron -->
<path d="M1075.500 146 l4 -4 l4 4" fill="none" stroke="#5f5f5f" stroke-width="1.600"/>
<use href="#ln" x="75" y="141" fill="none" stroke="#a3a3a3"/>
<use href="#ln" x="430" y="141" fill="none" stroke="#a3a3a3"/>
<use href="#ln" x="623" y="141" fill="none" stroke="#a3a3a3"/>
<use href="#ln" x="873.500" y="141" fill="none" stroke="#a3a3a3"/>
<!-- scroll arrows -->
<g fill="#6a6a6a">
<path d="M151.500 164 h7 l-3.500 -3.500z"/>
<path d="M151.500 636 h7 l-3.500 3.500z"/>
<path d="M1081.500 164 h7 l-3.500 -3.500z"/>
<path d="M1081.500 579 h7 l-3.500 3.500z"/>
<path d="M1081.500 597 h7.500 l-3.750 -3.800z M1081.500 601.200 h7.500 l-3.750 -3.800z"/>
<path d="M1081.500 611.200 h7.500 l-3.750 3.800z M1081.500 615.200 h7.500 l-3.750 3.800z"/>
</g>
<!-- status icons -->
<g id="g-status" fill="none" stroke="#6a6a6a" stroke-width="1">
<!-- spellcheck book -->
<path d="M85.500 652.500 h6 v9 h-6z M91.500 652.500 h3 M91.500 661.500 h5.500 M91.500 662 l-1.200 1.500" />
<path d="M97.500 653 l1.500 1.500 l-5 5 l-2 0.600 l0.600 -2z" fill="#f1f1f1"/>
<!-- notes -->
<path d="M578 657.500 h11 M578 660.500 h11 M578 663.500 h6.500"/>
<path d="M581.700 655.300 h4.600 l-2.300 -2.800z" fill="#6a6a6a" stroke="none"/>
<!-- comments -->
<path d="M645.500 652.500 h11 v8 h-5 l-2.500 3 v-3 h-3.500z" fill="#6a6a6a"/>
<!-- normal view -->
<path d="M746.500 651.900 h13 v11.200 h-13z M749.500 652 v11 M749.500 659.500 h10"/>
<rect x="752.500" y="654.300" width="4.500" height="2.500"/>
<!-- sorter -->
<rect x="784.500" y="651.900" width="5" height="4"/><rect x="792.500" y="651.900" width="5" height="4"/>
<rect x="784.500" y="659.100" width="5" height="4"/><rect x="792.500" y="659.100" width="5" height="4"/>
<!-- reading -->
<path d="M828.500 653.500 c-2 -1.300 -4 -1.500 -6 -1.200 v9.500 c2 -0.300 4 0 6 1.200 c2 -1.200 4 -1.500 6 -1.200 v-9.500 c-2 -0.300 -4 -0.100 -6 1.200z M828.500 653.500 v10"/>
<path d="M824 654.500 h3 M824 656.500 h3 M824 658.500 h3 M830 654.500 h3 M830 656.500 h3 M830 658.500 h3" stroke-width="0.800"/>
<!-- slideshow -->
<path d="M860 652.700 h13" stroke-width="1.600"/>
<path d="M861.500 653.500 v5.500 h10 v-5.500 M866.500 659 v4 M863.500 663.300 h6"/>
<path d="M864 655.500 h5" stroke-width="0.800"/>
<!-- zoom -->
<path d="M891 657.600 h6" stroke-width="2"/>
<path d="M901 657.500 h100" stroke="#a6a6a6"/>
<path d="M951.500 655 v5" stroke="#a6a6a6"/>
<rect x="931" y="651.600" width="4" height="11.400" fill="#5a5a5a" stroke="none"/>
<path d="M1005 657.600 h8.400 M1009.200 653.400 v8.400" stroke-width="2"/>
<!-- fit -->
<rect x="1063.500" y="652.500" width="12" height="12"/>
<path d="M1069.500 653.500 v3 M1069.500 663.500 v-3 M1064.500 658.500 h3 M1074.500 658.500 h-3 M1068.300 655.500 l1.200 1.200 l1.200 -1.200 M1068.300 661.500 l1.200 -1.200 l1.200 1.200 M1066.500 657.300 l1.200 1.200 l-1.200 1.200 M1072.500 657.300 l-1.200 1.200 l1.200 1.200" stroke-width="0.800"/>
</g>
<!--RIBBONICONS3-->
</svg>
<div id="winborder" class="abs"></div>
</body>
</html>
